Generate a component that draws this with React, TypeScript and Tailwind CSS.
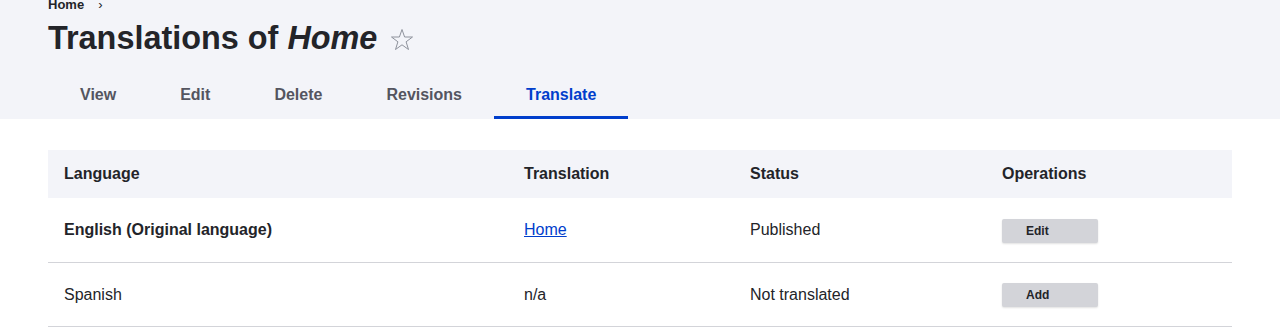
import React from 'react'

const tabs = ['View', 'Edit', 'Delete', 'Revisions', 'Translate']

const rows = [
  { lang: 'English (Original language)', original: true, translation: 'Home', link: true, status: 'Published', op: 'Edit', h: 'h-[65px]' },
  { lang: 'Spanish', original: false, translation: 'n/a', link: false, status: 'Not translated', op: 'Add', h: 'h-[64px]' },
]

const cols = 'grid grid-cols-[460px_226px_252px_246px] items-center'

function Star() {
  return (
    <svg width="24" height="24" viewBox="0 0 24 24" className="ml-[13px] mt-[4px]">
      <polygon
        points="12,1.5 14.6,9 22.5,9 16.1,13.8 18.5,21.5 12,16.8 5.5,21.5 7.9,13.8 1.5,9 9.4,9"
        fill="none"
        stroke="#8e929c"
        strokeWidth="1"
        strokeLinejoin="miter"
      />
    </svg>
  )
}

export default function App() {
  return (
    <div className="min-h-screen bg-white text-[#232429] font-['Liberation_Sans',Arial,sans-serif]">
      {/* Page header */}
      <header className="flex flex-col bg-[#f3f4f9] px-12">
        <div className="-mt-[3px] flex h-[16px] items-center gap-[14px] text-[13px] font-bold leading-[16px]">
          <span>Home</span>
          <span className="font-normal">›</span>
        </div>
        <div className="mt-[5px] flex items-center">
          <h1 className="text-[32.4px] font-bold leading-[40px]">
            Translations of <em>Home</em>
          </h1>
          <Star />
        </div>
        <nav className="mt-[13px] flex">
          {tabs.map((t) => {
            const active = t === 'Translate'
            return (
              <a
                key={t}
                className={
                  active
                    ? 'flex h-12 items-center border-b-[3px] border-[#003ecc] px-8 pt-[3px] text-base font-bold text-[#003ecc]'
                    : 'flex h-12 items-center px-8 text-base font-bold text-[#545560]'
                }
              >
                {t}
              </a>
            )
          })}
        </nav>
      </header>

      {/* Translations table */}
      <main className="mt-[31px] px-12">
        <div className={`${cols} h-[48px] bg-[#f3f4f9] text-base font-bold`}>
          <div className="px-4">Language</div>
          <div className="px-4">Translation</div>
          <div className="px-4">Status</div>
          <div className="px-4">Operations</div>
        </div>
        {rows.map((r) => (
          <div key={r.lang} className={`${cols} ${r.h} border-b border-[#d3d4d9] text-base`}>
            <div className={r.original ? 'px-4 font-bold' : 'px-4'}>{r.lang}</div>
            <div className="px-4">
              {r.link ? <a className="text-[#003ecc] underline">{r.translation}</a> : r.translation}
            </div>
            <div className="px-4">{r.status}</div>
            <div className="px-4">
              <button className="h-6 w-[96px] rounded-[2px] bg-[#d3d4d9] pl-6 text-left text-[12px] font-bold shadow-[0_1px_2px_rgba(0,0,0,0.12)]">
                {r.op}
              </button>
            </div>
          </div>
        ))}
      </main>
    </div>
  )
}
